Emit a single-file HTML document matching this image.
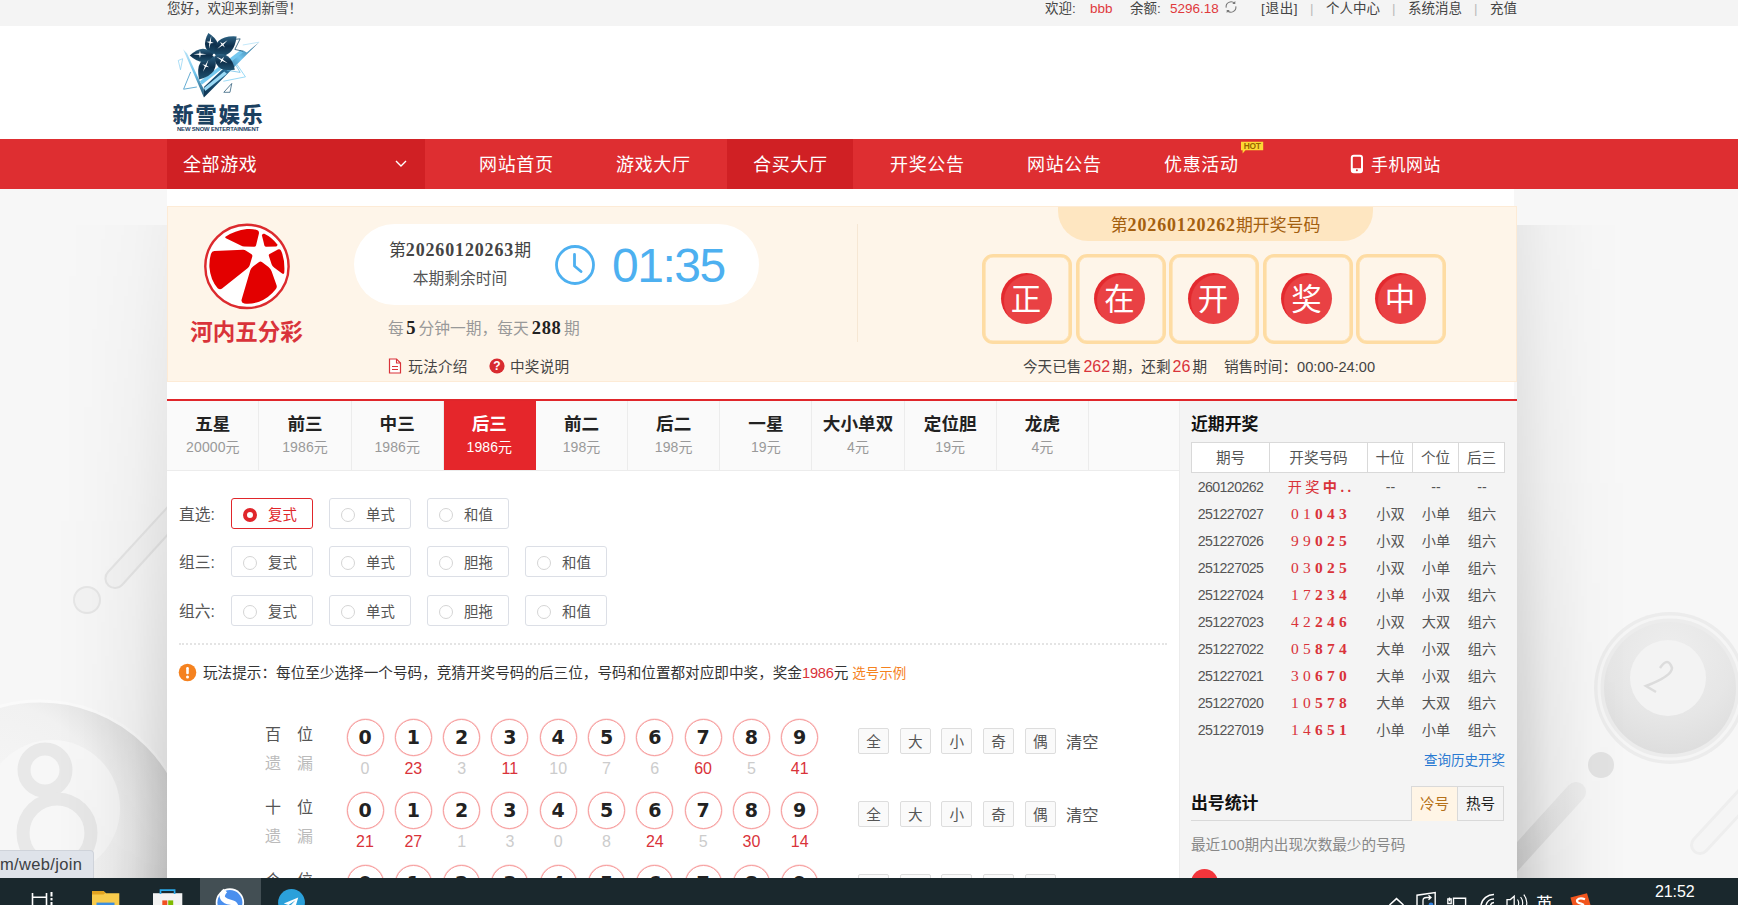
<!DOCTYPE html>
<html lang="zh-CN">
<head>
<meta charset="utf-8">
<title>河内五分彩 - 新雪娱乐</title>
<style>
*,*:before,*:after{box-sizing:border-box;margin:0;padding:0}
html,body{width:1738px;height:905px;overflow:hidden}
body{position:relative;background:#f7f7f7;font-family:"Liberation Sans","Noto Sans CJK SC",sans-serif;color:#333;font-size:14px}
.abs{position:absolute}
.serif{font-family:"Liberation Serif","Noto Serif CJK SC",serif}
a{color:inherit;text-decoration:none}
/* top bar */
#topbar{position:absolute;left:0;top:0;width:1738px;height:26px;background:#f4f4f4}
#topbar span{position:absolute;top:-1.2px;line-height:20px;font-size:13.5px;color:#444;white-space:nowrap}
#topbar .red{color:#e0393c}
#topbar .sep{color:#bbb}
/* header */
#header{position:absolute;left:0;top:26px;width:1738px;height:113px;background:#fff}
/* nav */
#nav{position:absolute;left:0;top:139px;width:1738px;height:50px;background:#de2e31}
#nav .all{position:absolute;left:167px;top:0;width:258px;height:50px;background:#d02024}
#nav .it{position:absolute;top:0;height:50px;line-height:53px;width:126px;text-align:center;color:#fff;font-size:18px;white-space:nowrap;letter-spacing:0.6px;text-indent:0.6px}
#nav .it.on{background:#d02024}
/* container */
#wrap{position:absolute;left:167px;top:189px;width:1347px;height:716px;background:#fff;box-shadow:none}

/* panel */
#panel{position:absolute;left:0;top:17px;width:1350px;height:176px;background:#fef5e9;border:1px solid #fdebd6}
#panel .pill{position:absolute;left:186px;top:17px;width:405px;height:81px;border-radius:41px;background:#fff}
#panel .box{position:absolute;top:47px;width:90px;height:90px;border:3px solid #fedca3;border-radius:11px;background:#fef5e9;box-shadow:inset 0 0 0 .6px #fedca3}
#panel .box i{position:absolute;left:15.5px;top:16px;width:51px;height:51px;border-radius:50%;background:radial-gradient(circle at 57% 55%,#e94144 0,#e94144 63%,#e3292e 66%);color:#fff;font-style:normal;font-size:30.5px;line-height:53px;text-align:center}

/* tabs */
#tabs{position:absolute;left:0;top:212px;width:1012px;height:69.5px;background:#fafafa;border-bottom:1px solid #ececec}
#tabs .t{position:absolute;top:0;width:92.17px;height:68.5px;border-right:1px solid #ececec;text-align:center}
#tabs .t b{display:block;font-size:17.6px;line-height:24px;margin-top:11px;color:#222;white-space:nowrap}
#tabs .t em{display:block;font-style:normal;font-size:14px;line-height:20px;margin-top:0.5px;color:#999;letter-spacing:0.1px}
#tabs .t.on{background:#e5262b;border-right-color:#e5262b}
#tabs .t.on b,#tabs .t.on em{color:#fff}
/* play types */
.pl{position:absolute;left:12px;font-size:15.75px;line-height:34px;color:#555}
.pb{position:absolute;width:82px;height:31px;border:1px solid #dcdfe6;border-radius:3px;background:#fff;font-size:14.4px;line-height:32px;color:#555;padding-left:36px}
.pb:before{content:"";position:absolute;left:11px;top:8.5px;width:14px;height:14px;border:1px solid #d5d5d5;border-radius:50%;background:#fff}
.pb.on{border-color:#e0262b;color:#e0262b}
.pb.on:before{border:4.5px solid #e0262b}
/* number rows */
.nl{position:absolute;left:98px;width:48px;font-size:16px;line-height:22px;white-space:nowrap;word-spacing:0}
.ball{position:absolute;width:37px;height:37px;border:1px solid #f79d9d;box-shadow:0 0 0 .5px rgba(247,157,157,.55);border-radius:50%;background:#fff;text-align:center;font-size:19px;font-weight:bold;line-height:34px;color:#222;font-family:"DejaVu Sans","Liberation Sans",sans-serif}
.ms{position:absolute;width:48px;text-align:center;font-size:16px;line-height:20px;color:#ccc}
.ms.r{color:#d9333a}
.qb{position:absolute;width:31px;height:26px;border:1px solid #ddd;border-radius:2px;background:#fafafa;text-align:center;font-size:14.625px;line-height:26px;color:#555}
.qc{position:absolute;font-size:16.3px;line-height:28px;color:#555}

/* sidebar */
#side{position:absolute;left:1012px;top:212px;width:338px;height:504px;background:#f4f4f4;border-left:1px solid #ececec}
#side .hd{position:absolute;left:11px;top:41px;width:314px;height:31px;background:#fff;border:1px solid #d9d9d9}
#side .hd span{position:absolute;top:0;height:29px;line-height:30px;text-align:center;font-size:14.625px;color:#555;border-right:1px solid #d9d9d9}
#side .r{position:absolute;left:11px;width:314px;height:27px;line-height:27px;font-size:14.2px;color:#555}
#side .r span{position:absolute;top:0;text-align:center;white-space:nowrap}
#side .r .c1{left:0;width:79px;letter-spacing:-0.6px}
#side .r .c2{left:79px;width:98px;color:#d9333a;font-family:"Liberation Serif","Noto Serif CJK SC",serif;font-size:15.5px;letter-spacing:4.2px;padding-left:4px;line-height:25px}
#side .r .c3{left:177px;width:45px}
#side .r .c4{left:222px;width:46px}
#side .r .c5{left:268px;width:46px}
</style>
</head>
<body>
<svg class="abs" style="left:0;top:189px" width="1738" height="689" viewBox="0 189 1738 689">
<defs>
<linearGradient id="gl" x1="0" x2="1" y1="0" y2="0"><stop offset="0" stop-color="#f4f4f4"/><stop offset="0.55" stop-color="#f7f7f7"/><stop offset="0.85" stop-color="#f5f5f5"/><stop offset="1" stop-color="#f1f1f1"/></linearGradient>
<linearGradient id="gld" x1="0" x2="0" y1="0" y2="1"><stop offset="0" stop-color="#000" stop-opacity="0"/><stop offset="0.5" stop-color="#000" stop-opacity="0.0"/><stop offset="1" stop-color="#000" stop-opacity="0.10"/></linearGradient>
<linearGradient id="gr" x1="0" x2="1" y1="0" y2="0"><stop offset="0" stop-color="#dedede"/><stop offset="0.12" stop-color="#ececec"/><stop offset="0.35" stop-color="#f5f5f5"/><stop offset="1" stop-color="#f6f6f6"/></linearGradient>
<radialGradient id="b8" cx="0.3" cy="0.45" r="0.75"><stop offset="0" stop-color="#f8f8f8"/><stop offset="0.6" stop-color="#f1f1f1"/><stop offset="0.85" stop-color="#dcdcdc"/><stop offset="1" stop-color="#c6c6c6"/></radialGradient>
<radialGradient id="b2" cx="0.5" cy="0.25" r="0.8"><stop offset="0" stop-color="#eeeeee"/><stop offset="0.6" stop-color="#e6e6e6"/><stop offset="1" stop-color="#dcdcdc"/></radialGradient>
<linearGradient id="st" x1="0" x2="1" y1="1" y2="0"><stop offset="0" stop-color="#dedede"/><stop offset="1" stop-color="#eeeeee"/></linearGradient>
</defs>
<!-- left decorations -->
<g fill="none" stroke="#e6e6e6" stroke-width="2">
<path d="M108 572 L176 498 A9 9 0 0 1 190 510 L122 585 A9 9 0 0 1 108 572 Z" fill="#f4f4f4"/>
<circle cx="87" cy="600" r="13" fill="#f3f3f3"/>
</g>
<circle cx="40" cy="852" r="152" fill="url(#b8)"/>
<circle cx="40" cy="852" r="151" fill="none" stroke="#fafafa" stroke-width="3"/>
<circle cx="52" cy="808" r="68" fill="#f7f7f7"/>
<g fill="none" stroke="#e8e8e8" stroke-width="13"><circle cx="45" cy="770" r="21"/><circle cx="57" cy="833" r="34"/></g>
<!-- right decorations -->
<circle cx="1670" cy="688" r="76" fill="#ececec"/>
<circle cx="1670" cy="688" r="71" fill="none" stroke="#f5f5f5" stroke-width="3"/>
<circle cx="1670" cy="688" r="66" fill="url(#b2)"/>
<circle cx="1668" cy="678" r="38" fill="#f3f3f3"/>
<path d="M1660 668 Q1668 656 1672 668 Q1672 676 1646 686 L1656 692" fill="none" stroke="#dcdcdc" stroke-width="2.5"/>
<circle cx="1601" cy="765" r="13" fill="#e3e3e3"/>
<path d="M1496 880 L1576 792" stroke="url(#st)" stroke-width="20" stroke-linecap="round" fill="none"/>
<path d="M1700 845 L1760 780" stroke="#eeeeee" stroke-width="20" stroke-linecap="round" fill="none"/>
<path d="M1700 845 L1760 780" stroke="#f5f5f5" stroke-width="14" stroke-linecap="round" fill="none"/>
</svg>

<div class="abs" style="left:1517px;top:225px;width:110px;height:653px;background:linear-gradient(to right,rgba(0,0,0,.17),rgba(0,0,0,.07) 30%,rgba(0,0,0,.02) 65%,rgba(0,0,0,0));-webkit-mask-image:linear-gradient(to bottom,rgba(0,0,0,.35),rgba(0,0,0,.5) 40%,#000);mask-image:linear-gradient(to bottom,rgba(0,0,0,.35),rgba(0,0,0,.5) 40%,#000)"></div>
<div class="abs" style="left:57px;top:225px;width:110px;height:653px;background:linear-gradient(to left,rgba(0,0,0,.14),rgba(0,0,0,.06) 30%,rgba(0,0,0,.02) 65%,rgba(0,0,0,0));-webkit-mask-image:linear-gradient(to bottom,rgba(0,0,0,.2),rgba(0,0,0,.45) 40%,#000);mask-image:linear-gradient(to bottom,rgba(0,0,0,.2),rgba(0,0,0,.45) 40%,#000)"></div>
<div id="topbar">
<span style="left:167px">您好，欢迎来到新雪！</span>
<span style="left:1045px">欢迎:</span>
<span class="red" style="left:1090px">bbb</span>
<span style="left:1130px">余额:</span>
<span class="red" style="left:1170px">5296.18</span>
<svg class="abs" style="left:1224px;top:0" width="14" height="14" viewBox="0 0 14 14"><path d="M2.2 7.6 A4.9 4.9 0 0 1 10.6 3.4 M11.8 6.4 A4.9 4.9 0 0 1 3.4 10.6" fill="none" stroke="#777" stroke-width="1.1"/><path d="M11.3 1 V4 H8.3 Z M2.7 13 V10 H5.7 Z" fill="#777"/></svg>
<span style="left:1261px;letter-spacing:0.7px">[退出]</span>
<span class="sep" style="left:1310px">|</span>
<span style="left:1326px">个人中心</span>
<span class="sep" style="left:1392px">|</span>
<span style="left:1408px">系统消息</span>
<span class="sep" style="left:1474px">|</span>
<span style="left:1490px">充值</span>
</div>
<div id="header">
<svg class="abs" style="left:165px;top:0" width="110" height="80" viewBox="0 0 1244 905">
<defs><linearGradient id="lg1" x1="0" y1="1" x2="1" y2="0"><stop offset="0" stop-color="#0f3350"/><stop offset="0.4" stop-color="#1f5f88"/><stop offset="0.68" stop-color="#6fc4ee"/><stop offset="1" stop-color="#1f587a"/></linearGradient>
<linearGradient id="lg2" x1="0" y1="0" x2="0" y2="1"><stop offset="0" stop-color="#2d6283"/><stop offset="0.5" stop-color="#0e2f4b"/><stop offset="1" stop-color="#1f5270"/></linearGradient>
<linearGradient id="lg3" x1="0" y1="0" x2="0" y2="1"><stop offset="0" stop-color="#bfe6f8"/><stop offset="0.5" stop-color="#6fc3ec"/><stop offset="1" stop-color="#1d4f6e"/></linearGradient></defs>
<polygon points="205,262 250,310 400,640 440,715 440,810" fill="url(#lg3)"/>
<polygon points="440,810 1065,183 925,300 880,275 440,690" fill="url(#lg1)"/>
<polygon points="395,625 415,665 880,300 860,270" fill="#74c8ef"/>
<polygon points="440,700 455,735 700,540 670,515" fill="#9bdaf6"/>
<g fill="none" stroke-linejoin="miter">
<path d="M290 520 L210 715 L360 690" stroke="#3f97c8" stroke-width="9"/>
<path d="M150 390 L200 370 L175 495 Z" stroke="#7ccbf0" stroke-width="7"/>
<path d="M665 750 L755 650 L735 750 Z" stroke="#1d4f6e" stroke-width="8"/>
<path d="M800 150 L850 145 L790 265 L880 285" stroke="#1d4f6e" stroke-width="9"/>
<path d="M880 215 L1065 183" stroke="#8fd3f3" stroke-width="6"/>
<path d="M810 430 L910 575 L660 625" stroke="#7fd0f4" stroke-width="9"/>
<path d="M700 500 L850 525 L800 440" stroke="#5db9e6" stroke-width="8"/>
</g>
<g fill="url(#lg2)"><path d="M555 330 Q665 189 490 80 Q390 261 555 330 Z"/><path d="M555 330 Q779 381 810 118 Q546 101 555 330 Z"/><path d="M555 330 Q563 529 790 495 Q744 270 555 330 Z"/><path d="M555 330 Q332 352 385 605 Q635 539 555 330 Z"/><path d="M555 330 Q437 181 280 335 Q442 483 555 330 Z"/></g>
<g fill="#fff"><polygon points="497,258 501,191 469,178 504,176 523,112 519,179 551,192 516,194"/><polygon points="707,162 661,211 677,242 649,221 593,258 639,209 623,178 651,199"/><polygon points="469,320 403,328 395,362 387,328 321,320 387,312 395,278 403,312"/><polygon points="709,422 648,396 624,421 634,388 581,348 642,374 666,349 656,382"/><polygon points="429,517 450,454 422,432 456,440 491,383 470,446 498,468 464,460"/><circle cx="555" cy="330" r="15"/></g>
</svg>
<div class="abs" style="left:172.5px;top:73.6px;width:100px;font-size:21px;font-weight:900;line-height:30px;color:#1b4060;white-space:nowrap;letter-spacing:2.1px">新雪娱乐</div>
<div class="abs" style="left:165px;top:98px;width:106px;text-align:center;font-size:5.9px;font-weight:bold;line-height:10px;color:#1b4060;white-space:nowrap;letter-spacing:-0.15px">NEW SNOW ENTERTAINMENT</div>

</div>
<div id="nav">
<div class="all"><span class="abs" style="left:16px;top:0;line-height:53px;font-size:18px;color:#fff;letter-spacing:0.6px">全部游戏</span>
<svg class="abs" style="left:227px;top:19px" width="14" height="12" viewBox="0 0 14 12"><path d="M2 3 L7 8 L12 3" fill="none" stroke="#fff" stroke-width="1.4"/></svg></div>
<a class="it" style="left:453px">网站首页</a>
<a class="it" style="left:590px">游戏大厅</a>
<a class="it on" style="left:727px">合买大厅</a>
<a class="it" style="left:864px">开奖公告</a>
<a class="it" style="left:1001px">网站公告</a>
<a class="it" style="left:1138px">优惠活动</a>
<a class="it" style="left:1370.5px;width:70px;text-align:left;font-size:16.875px">手机网站</a>
<svg class="abs" style="left:1240px;top:2px" width="26" height="14" viewBox="0 0 26 14"><path d="M1 0.7 H23.2 V9.2 H5.5 L2.6 12.6 V9.2 H1 Z" fill="#fdd835"/><text x="12.1" y="8" text-anchor="middle" font-family="Liberation Sans,sans-serif" font-weight="bold" font-size="8.4" fill="#9a6400" letter-spacing="-0.3">HOT</text></svg>
<svg class="abs" style="left:1350px;top:15px" width="14" height="20" viewBox="0 0 14 20"><rect x="1.8" y="1.8" width="10.2" height="16.4" rx="2" fill="none" stroke="#fff" stroke-width="2"/><rect x="1.8" y="14.2" width="10.2" height="4" fill="#fff"/><circle cx="6.9" cy="16.3" r="1" fill="#de2e31"/></svg>

</div>
<div id="wrap">
<div id="panel">
<svg class="abs" style="left:27px;top:8px" width="105" height="100" viewBox="0 0 950 905">
<circle cx="470" cy="465" r="377" fill="#fff" stroke="#dc2a2e" stroke-width="22"/>
<g fill="#e30000">
<path d="M275 197 Q360 140 470 127 Q530 122 570 140 Q582 150 578 170 L552 275 Q548 288 535 288 L445 286 Q430 285 415 277 L280 210 Q270 203 275 197 Z"/>
<path d="M606 185 Q606 165 628 170 Q700 205 745 268 Q748 283 735 285 L645 288 Q632 288 628 275 Z"/>
<path d="M175 325 L435 315 Q450 315 462 323 L512 355 Q522 363 518 377 L495 455 Q490 470 478 480 L245 665 Q225 680 205 662 Q140 590 130 470 Q128 400 145 350 Q152 327 175 325 Z"/>
<path d="M668 368 Q665 358 675 352 L750 312 Q768 305 778 322 Q815 400 808 520 Q805 540 788 530 L718 478 Q700 465 693 445 Z"/>
<path d="M580 425 Q592 415 605 425 L665 470 Q685 485 693 508 L738 635 Q745 655 730 672 Q670 750 580 785 Q510 808 445 800 Q415 795 422 765 L500 500 Q507 478 525 465 Z"/>
</g></svg>
<div class="abs" style="left:-1.5px;top:109.5px;width:160px;text-align:center;font-size:22.5px;font-weight:bold;color:#d9333a;line-height:32px;letter-spacing:0">河内五分彩</div>
<div class="pill"></div>
<div class="abs serif" style="left:216px;top:30px;width:152px;text-align:center;font-size:16.875px;line-height:24px;color:#444;white-space:nowrap"><span style="font-family:'Noto Sans CJK SC',sans-serif">第</span><b style="font-size:18px;letter-spacing:0.85px">20260120263</b><span style="font-family:'Noto Sans CJK SC',sans-serif">期</span></div>
<div class="abs" style="left:220px;top:60px;width:144px;text-align:center;font-size:15.75px;line-height:24px;color:#555">本期剩余时间</div>
<svg class="abs" style="left:386.3px;top:37px" width="42" height="42" viewBox="0 0 42 42"><circle cx="21" cy="21" r="18.5" fill="none" stroke="#4db0f0" stroke-width="2.8"/><path d="M20.5 10.5 V22 L27 27.5" fill="none" stroke="#4db0f0" stroke-width="2.8" stroke-linecap="round" stroke-linejoin="round"/></svg>
<div class="abs" id="timer" style="left:444px;top:31px;font-size:48px;line-height:56px;color:#4db0f0;white-space:nowrap;letter-spacing:-1.5px">01:35</div>
<div class="abs" style="left:220px;top:109px;font-size:15.75px;line-height:24px;color:#999;white-space:nowrap">每<b class="serif" style="color:#222;font-size:18.5px;padding:0 2.5px;letter-spacing:0.6px">5</b>分钟一期，每天<b class="serif" style="color:#222;font-size:18.5px;padding:0 2.5px 0 3px;letter-spacing:0.6px">288</b>期</div>
<svg class="abs" style="left:220px;top:151px" width="14" height="16" viewBox="0 0 14 16"><path d="M1.5 1 H8.5 L12.5 5 V15 H1.5 Z" fill="#fff" stroke="#d9333a" stroke-width="1.2"/><path d="M8.5 1 V5 H12.5 M4 8.5 H10 M4 11.5 H10" fill="none" stroke="#d9333a" stroke-width="1.1"/></svg>
<div class="abs" style="left:240.3px;top:149px;font-size:14.625px;line-height:22px;color:#444;letter-spacing:0.25px">玩法介绍</div>
<svg class="abs" style="left:321px;top:151px" width="16" height="16" viewBox="0 0 16 16"><circle cx="8" cy="8" r="7.6" fill="#d82b30"/><text x="8" y="12.2" text-anchor="middle" font-family="Liberation Sans,sans-serif" font-weight="bold" font-size="12" fill="#fff">?</text></svg>
<div class="abs" style="left:342px;top:149px;font-size:14.625px;line-height:22px;color:#444;letter-spacing:0.25px">中奖说明</div>
<div class="abs" style="left:689px;top:17px;width:1px;height:118px;background:#f6e7d4"></div>
<div class="abs" style="left:890px;top:0;width:315px;height:34px;background:#fee6c1;border-radius:0 0 30px 30px"></div>
<div class="abs serif" style="left:890px;top:5px;width:315px;text-align:center;font-size:16.875px;line-height:24px;color:#a4600f;white-space:nowrap"><span style="font-family:'Noto Sans CJK SC',sans-serif">第</span><b style="font-size:18px;letter-spacing:0.85px">20260120262</b><span style="font-family:'Noto Sans CJK SC',sans-serif">期开奖号码</span></div>
<div class="box" style="left:814px"><i>正</i></div>
<div class="box" style="left:907.5px"><i>在</i></div>
<div class="box" style="left:1001px"><i>开</i></div>
<div class="box" style="left:1094.5px"><i>奖</i></div>
<div class="box" style="left:1188px"><i>中</i></div>
<div class="abs" style="left:855px;top:149px;font-size:14.625px;line-height:22px;color:#444;white-space:nowrap">今天已售<span style="color:#d9333a;font-size:16px;padding:0 2px">262</span>期，还剩<span style="color:#d9333a;font-size:16px;padding:0 2px">26</span>期<span style="display:inline-block;width:17px"></span>销售时间：00:00-24:00</div>
</div>
<div class="abs" style="left:0;top:210px;width:1350px;height:2px;background:#e0262b"></div>

<div id="tabs">
<div class="t" style="left:0.30px"><b>五星</b><em>20000元</em></div>
<div class="t" style="left:92.47px"><b>前三</b><em>1986元</em></div>
<div class="t" style="left:184.64px"><b>中三</b><em>1986元</em></div>
<div class="t on" style="left:276.81px"><b>后三</b><em>1986元</em></div>
<div class="t" style="left:368.98px"><b>前二</b><em>198元</em></div>
<div class="t" style="left:461.15px"><b>后二</b><em>198元</em></div>
<div class="t" style="left:553.32px"><b>一星</b><em>19元</em></div>
<div class="t" style="left:645.49px"><b>大小单双</b><em>4元</em></div>
<div class="t" style="left:737.66px"><b>定位胆</b><em>19元</em></div>
<div class="t" style="left:829.83px"><b>龙虎</b><em>4元</em></div>
</div>

<div class="pl" style="top:309px">直选:</div>
<div class="pb on" style="left:64px;top:309px">复式</div>
<div class="pb" style="left:162px;top:309px">单式</div>
<div class="pb" style="left:260px;top:309px">和值</div>
<div class="pl" style="top:357.3px">组三:</div>
<div class="pb" style="left:64px;top:357.3px">复式</div>
<div class="pb" style="left:162px;top:357.3px">单式</div>
<div class="pb" style="left:260px;top:357.3px">胆拖</div>
<div class="pb" style="left:358px;top:357.3px">和值</div>
<div class="pl" style="top:406px">组六:</div>
<div class="pb" style="left:64px;top:406px">复式</div>
<div class="pb" style="left:162px;top:406px">单式</div>
<div class="pb" style="left:260px;top:406px">胆拖</div>
<div class="pb" style="left:358px;top:406px">和值</div>
<div class="abs" style="left:12px;top:454px;width:988px;height:0;border-top:2px dotted #e4e4e4"></div>
<svg class="abs" style="left:11px;top:474px" width="19" height="19" viewBox="0 0 19 19"><circle cx="9.5" cy="9.5" r="8.8" fill="#f5821f"/><rect x="8.2" y="4" width="2.6" height="7.2" rx="1.2" fill="#fff"/><circle cx="9.5" cy="13.9" r="1.5" fill="#fff"/></svg>
<div class="abs" style="left:36px;top:473px;font-size:14.625px;line-height:22px;color:#333;white-space:nowrap">玩法提示：每位至少选择一个号码，竞猜开奖号码的后三位，号码和位置都对应即中奖，奖金<span style="color:#d9333a;font-size:14.625px;letter-spacing:-0.2px">1986</span>元 <span style="color:#f5821f;font-size:13.5px">选号示例</span></div>
<div class="nl" style="top:535px;color:#555">百<span style="display:inline-block;width:16px"></span>位</div>
<div class="nl" style="top:563.5px;color:#bbb">遗<span style="display:inline-block;width:16px"></span>漏</div>
<div class="ball" style="left:179.5px;top:530px">0</div><div class="ball" style="left:227.8px;top:530px">1</div><div class="ball" style="left:276.1px;top:530px">2</div><div class="ball" style="left:324.4px;top:530px">3</div><div class="ball" style="left:372.7px;top:530px">4</div><div class="ball" style="left:421.0px;top:530px">5</div><div class="ball" style="left:469.3px;top:530px">6</div><div class="ball" style="left:517.6px;top:530px">7</div><div class="ball" style="left:565.9px;top:530px">8</div><div class="ball" style="left:614.2px;top:530px">9</div>
<div class="ms" style="left:174.0px;top:570px">0</div><div class="ms r" style="left:222.3px;top:570px">23</div><div class="ms" style="left:270.6px;top:570px">3</div><div class="ms r" style="left:318.9px;top:570px">11</div><div class="ms" style="left:367.2px;top:570px">10</div><div class="ms" style="left:415.5px;top:570px">7</div><div class="ms" style="left:463.8px;top:570px">6</div><div class="ms r" style="left:512.1px;top:570px">60</div><div class="ms" style="left:560.4px;top:570px">5</div><div class="ms r" style="left:608.7px;top:570px">41</div>
<div class="qb" style="left:691.0px;top:539px">全</div><div class="qb" style="left:732.7px;top:539px">大</div><div class="qb" style="left:774.4px;top:539px">小</div><div class="qb" style="left:816.1px;top:539px">奇</div><div class="qb" style="left:857.8px;top:539px">偶</div><div class="qc" style="left:899px;top:539px">清空</div>
<div class="nl" style="top:608px;color:#555">十<span style="display:inline-block;width:16px"></span>位</div>
<div class="nl" style="top:636.5px;color:#bbb">遗<span style="display:inline-block;width:16px"></span>漏</div>
<div class="ball" style="left:179.5px;top:603px">0</div><div class="ball" style="left:227.8px;top:603px">1</div><div class="ball" style="left:276.1px;top:603px">2</div><div class="ball" style="left:324.4px;top:603px">3</div><div class="ball" style="left:372.7px;top:603px">4</div><div class="ball" style="left:421.0px;top:603px">5</div><div class="ball" style="left:469.3px;top:603px">6</div><div class="ball" style="left:517.6px;top:603px">7</div><div class="ball" style="left:565.9px;top:603px">8</div><div class="ball" style="left:614.2px;top:603px">9</div>
<div class="ms r" style="left:174.0px;top:643px">21</div><div class="ms r" style="left:222.3px;top:643px">27</div><div class="ms" style="left:270.6px;top:643px">1</div><div class="ms" style="left:318.9px;top:643px">3</div><div class="ms" style="left:367.2px;top:643px">0</div><div class="ms" style="left:415.5px;top:643px">8</div><div class="ms r" style="left:463.8px;top:643px">24</div><div class="ms" style="left:512.1px;top:643px">5</div><div class="ms r" style="left:560.4px;top:643px">30</div><div class="ms r" style="left:608.7px;top:643px">14</div>
<div class="qb" style="left:691.0px;top:612px">全</div><div class="qb" style="left:732.7px;top:612px">大</div><div class="qb" style="left:774.4px;top:612px">小</div><div class="qb" style="left:816.1px;top:612px">奇</div><div class="qb" style="left:857.8px;top:612px">偶</div><div class="qc" style="left:899px;top:612px">清空</div>
<div class="nl" style="top:681px;color:#555">个<span style="display:inline-block;width:16px"></span>位</div>
<div class="nl" style="top:709.5px;color:#bbb">遗<span style="display:inline-block;width:16px"></span>漏</div>
<div class="ball" style="left:179.5px;top:676px">0</div><div class="ball" style="left:227.8px;top:676px">1</div><div class="ball" style="left:276.1px;top:676px">2</div><div class="ball" style="left:324.4px;top:676px">3</div><div class="ball" style="left:372.7px;top:676px">4</div><div class="ball" style="left:421.0px;top:676px">5</div><div class="ball" style="left:469.3px;top:676px">6</div><div class="ball" style="left:517.6px;top:676px">7</div><div class="ball" style="left:565.9px;top:676px">8</div><div class="ball" style="left:614.2px;top:676px">9</div>
<div class="ms" style="left:174.0px;top:716px">0</div><div class="ms" style="left:222.3px;top:716px">0</div><div class="ms" style="left:270.6px;top:716px">0</div><div class="ms" style="left:318.9px;top:716px">0</div><div class="ms" style="left:367.2px;top:716px">0</div><div class="ms" style="left:415.5px;top:716px">0</div><div class="ms" style="left:463.8px;top:716px">0</div><div class="ms" style="left:512.1px;top:716px">0</div><div class="ms" style="left:560.4px;top:716px">0</div><div class="ms" style="left:608.7px;top:716px">0</div>
<div class="qb" style="left:691.0px;top:685px">全</div><div class="qb" style="left:732.7px;top:685px">大</div><div class="qb" style="left:774.4px;top:685px">小</div><div class="qb" style="left:816.1px;top:685px">奇</div><div class="qb" style="left:857.8px;top:685px">偶</div><div class="qc" style="left:899px;top:685px">清空</div>

<div id="side">
<div class="abs" style="left:11px;top:11.5px;font-size:16.875px;font-weight:bold;line-height:24px;color:#111">近期开奖</div>
<div class="hd"><span style="left:0;width:78px">期号</span><span style="left:78px;width:98px">开奖号码</span><span style="left:176px;width:45px">十位</span><span style="left:221px;width:46px">个位</span><span style="left:267px;width:45px;border-right:0">后三</span></div>
<div class="r" style="top:73px"><span class="c1">260120262</span><span class="c2" style="letter-spacing:3.4px;font-size:14.2px;font-family:'Liberation Serif','Noto Sans CJK SC',sans-serif;line-height:27px">开奖<b>中..</b></span><span class="c3">--</span><span class="c4">--</span><span class="c5">--</span></div>
<div class="r" style="top:100px"><span class="c1">251227027</span><span class="c2">01<b>043</b></span><span class="c3">小双</span><span class="c4">小单</span><span class="c5">组六</span></div>
<div class="r" style="top:127px"><span class="c1">251227026</span><span class="c2">99<b>025</b></span><span class="c3">小双</span><span class="c4">小单</span><span class="c5">组六</span></div>
<div class="r" style="top:154px"><span class="c1">251227025</span><span class="c2">03<b>025</b></span><span class="c3">小双</span><span class="c4">小单</span><span class="c5">组六</span></div>
<div class="r" style="top:181px"><span class="c1">251227024</span><span class="c2">17<b>234</b></span><span class="c3">小单</span><span class="c4">小双</span><span class="c5">组六</span></div>
<div class="r" style="top:208px"><span class="c1">251227023</span><span class="c2">42<b>246</b></span><span class="c3">小双</span><span class="c4">大双</span><span class="c5">组六</span></div>
<div class="r" style="top:235px"><span class="c1">251227022</span><span class="c2">05<b>874</b></span><span class="c3">大单</span><span class="c4">小双</span><span class="c5">组六</span></div>
<div class="r" style="top:262px"><span class="c1">251227021</span><span class="c2">30<b>670</b></span><span class="c3">大单</span><span class="c4">小双</span><span class="c5">组六</span></div>
<div class="r" style="top:289px"><span class="c1">251227020</span><span class="c2">10<b>578</b></span><span class="c3">大单</span><span class="c4">大双</span><span class="c5">组六</span></div>
<div class="r" style="top:316px"><span class="c1">251227019</span><span class="c2">14<b>651</b></span><span class="c3">小单</span><span class="c4">小单</span><span class="c5">组六</span></div>
<div class="abs" style="left:180px;top:350px;width:145px;text-align:right;font-size:13.5px;line-height:20px;color:#2a7ad2">查询历史开奖</div>
<div class="abs" style="left:11px;top:391px;font-size:16.875px;font-weight:bold;line-height:24px;color:#111">出号统计</div>
<div class="abs" style="left:11px;top:419px;width:221px;height:1px;background:#d9d9d9"></div>
<div class="abs" style="left:231px;top:385px;width:47px;height:35px;background:#fff5e6;border:1px solid #d9d9d9;border-bottom:0;text-align:center;font-size:14.625px;line-height:35px;color:#b5711a">冷号</div>
<div class="abs" style="left:277px;top:385px;width:47px;height:35px;background:#f4f4f4;border:1px solid #d9d9d9;text-align:center;font-size:14.625px;line-height:34px;color:#222">热号</div>
<div class="abs" style="left:11px;top:433px;font-size:14.625px;line-height:22px;color:#888;white-space:nowrap">最近100期内出现次数最少的号码</div>
<div class="abs" style="left:11px;top:468px;width:27px;height:27px;border-radius:50%;background:#f2353b;color:#fff;text-align:center;font-size:15px;line-height:27px;font-weight:bold">1</div>
</div>

</div>
<div class="abs" style="left:0;top:850px;width:94px;height:28px;background:#dfe3ea;border-top:1px solid #cfd3da;border-right:1px solid #cfd3da;border-radius:0 4px 0 0;font-size:16.5px;line-height:26px;color:#3c4043;white-space:nowrap;overflow:hidden;letter-spacing:0.35px">m/web/join</div>
<div id="taskbar" class="abs" style="left:0;top:878px;width:1738px;height:27px;background:#1a282d;overflow:hidden">
<div class="abs" style="left:200px;top:0;width:61px;height:27px;background:#434f54"></div>
<svg class="abs" style="left:0;top:0" width="1738" height="27" viewBox="0 878 1738 27">
<!-- task view -->
<g fill="none" stroke="#fff" stroke-width="1.6"><path d="M32.5 893 V905 M46.5 893 V905 M32.5 897.2 H46.5"/><path d="M51.5 892 V896.5 M51.5 902 V905" stroke-width="2"/><rect x="50.5" y="898" width="2" height="2.4" fill="#fff" stroke="none"/></g>
<!-- folder -->
<path d="M92 891 H103.5 L106 893.3 H119.3 V905 H92 Z" fill="#f8cb4c"/><path d="M92 891 H103.5 L105.5 893 L103.5 894.6 H92 Z" fill="#e2a320"/><rect x="96.5" y="902.6" width="18" height="3" fill="#3b8de0"/>
<!-- store -->
<path d="M153 893.2 H182.3 V905 H153 Z" fill="#f3f3f3"/><path d="M160.5 894 V890.2 H174.6 V894" fill="none" stroke="#2aa9ea" stroke-width="1.7"/><rect x="162.3" y="900.4" width="5" height="5" fill="#f25022"/><rect x="168.2" y="900.4" width="5" height="5" fill="#7fba00"/>
<!-- sogou browser -->
<circle cx="229.9" cy="902.5" r="14.2" fill="#fff"/><circle cx="229.9" cy="902.5" r="12.5" fill="#4a8fee"/><path d="M225.2 890.5 C218.5 897.5 224.5 901.2 230.5 902.2 C235.5 903.2 237 906 234.5 911" fill="none" stroke="#fff" stroke-width="5.2"/>
<!-- telegram -->
<circle cx="291.5" cy="902.5" r="13.4" fill="#2ba0da"/><path d="M283.8 903.4 L298.2 897.4 L296 905 H291 L295.5 900.2 L288.5 905 Z" fill="#fff"/>
<!-- tray -->
<path d="M1389.5 905 L1396.5 898.6 L1403.5 905" fill="none" stroke="#fff" stroke-width="1.5"/>
<path d="M1417 905 V895.2 L1435.2 892.6 V905" fill="none" stroke="#fff" stroke-width="1.4"/><path d="M1423 905 V900.5 Q1423 897.5 1426.5 897.5 H1431 M1428.5 895.3 L1431 897.5 L1428.5 899.7" fill="none" stroke="#fff" stroke-width="1.3"/><circle cx="1431" cy="905" r="2.4" fill="#2f7fe0"/>
<path d="M1453.5 905 V898.2 H1465.6 V905" fill="none" stroke="#fff" stroke-width="1.4"/><path d="M1449.5 897.5 V901.2 M1447.8 899 H1451.2 V903.5 H1447.8 Z" fill="none" stroke="#fff" stroke-width="1.3"/>
<path d="M1481 905 A13 13 0 0 1 1494 894.5" fill="none" stroke="#fff" stroke-width="1.5"/><path d="M1486 905 A8 8 0 0 1 1494 899" fill="none" stroke="#fff" stroke-width="1.5"/><path d="M1490.5 905 A4 4 0 0 1 1494 902.5" fill="none" stroke="#fff" stroke-width="1.5"/>
<path d="M1507 905 V899.6 H1510.4 L1514.2 896.2 V905" fill="none" stroke="#fff" stroke-width="1.3"/><path d="M1517.5 899.5 Q1519.3 902 1518.4 905 M1520.6 897 Q1523.4 900.6 1522.4 905 M1523.8 894.6 Q1527.6 899.4 1526.6 905" fill="none" stroke="#fff" stroke-width="1.2"/>
<path d="M1570.5 897.5 L1587 893.2 L1590.5 905 H1572.5 Z" fill="#f2551d"/><path d="M1585 899.2 Q1579.5 897.2 1577.2 900 Q1576.2 902.6 1581 903.6 L1584 905" fill="none" stroke="#fff" stroke-width="2.2"/>
</svg>
<div class="abs" style="left:1536px;top:17px;font-size:17px;line-height:20px;color:#fff">英</div>
<div class="abs" style="left:1655px;top:4px;font-size:16px;line-height:20px;color:#fff;letter-spacing:-0.1px">21:52</div>
</div>

</body>
</html>
